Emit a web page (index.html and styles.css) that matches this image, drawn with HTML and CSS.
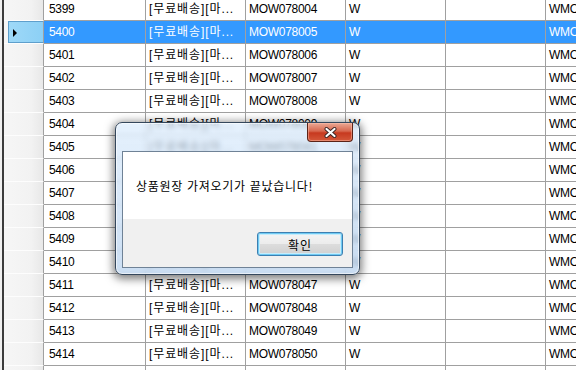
FILE: index.html
```html
<!DOCTYPE html>
<html lang="ko">
<head>
	<meta charset="UTF-8">
	<title>상품원장</title>
	<link rel="stylesheet" href="styles.css">
</head>
<body>
<div class="screen">
	<div class="grid">
		<div class="row"><div class="hd"></div><div class="c c1">5399</div><div class="c k">[무료배송][마...</div><div class="c">MOW078004</div><div class="c">W</div><div class="c"></div><div class="c">WMOW078004</div></div>
		<div class="row sel"><div class="hd"><span class="tri"></span></div><div class="c c1">5400</div><div class="c k">[무료배송][마...</div><div class="c">MOW078005</div><div class="c">W</div><div class="c"></div><div class="c">WMOW078005</div></div>
		<div class="row"><div class="hd"></div><div class="c c1">5401</div><div class="c k">[무료배송][마...</div><div class="c">MOW078006</div><div class="c">W</div><div class="c"></div><div class="c">WMOW078006</div></div>
		<div class="row"><div class="hd"></div><div class="c c1">5402</div><div class="c k">[무료배송][마...</div><div class="c">MOW078007</div><div class="c">W</div><div class="c"></div><div class="c">WMOW078007</div></div>
		<div class="row"><div class="hd"></div><div class="c c1">5403</div><div class="c k">[무료배송][마...</div><div class="c">MOW078008</div><div class="c">W</div><div class="c"></div><div class="c">WMOW078008</div></div>
		<div class="row"><div class="hd"></div><div class="c c1">5404</div><div class="c k">[무료배송][마...</div><div class="c">MOW078009</div><div class="c">W</div><div class="c"></div><div class="c">WMOW078009</div></div>
		<div class="row"><div class="hd"></div><div class="c c1">5405</div><div class="c k">[무료배송][마...</div><div class="c">MOW078041</div><div class="c">W</div><div class="c"></div><div class="c">WMOW078041</div></div>
		<div class="row"><div class="hd"></div><div class="c c1">5406</div><div class="c k">[무료배송][마...</div><div class="c">MOW078042</div><div class="c">W</div><div class="c"></div><div class="c">WMOW078042</div></div>
		<div class="row"><div class="hd"></div><div class="c c1">5407</div><div class="c k">[무료배송][마...</div><div class="c">MOW078043</div><div class="c">W</div><div class="c"></div><div class="c">WMOW078043</div></div>
		<div class="row"><div class="hd"></div><div class="c c1">5408</div><div class="c k">[무료배송][마...</div><div class="c">MOW078044</div><div class="c">W</div><div class="c"></div><div class="c">WMOW078044</div></div>
		<div class="row"><div class="hd"></div><div class="c c1">5409</div><div class="c k">[무료배송][마...</div><div class="c">MOW078045</div><div class="c">W</div><div class="c"></div><div class="c">WMOW078045</div></div>
		<div class="row"><div class="hd"></div><div class="c c1">5410</div><div class="c k">[무료배송][마...</div><div class="c">MOW078046</div><div class="c">W</div><div class="c"></div><div class="c">WMOW078046</div></div>
		<div class="row"><div class="hd"></div><div class="c c1">5411</div><div class="c k">[무료배송][마...</div><div class="c">MOW078047</div><div class="c">W</div><div class="c"></div><div class="c">WMOW078047</div></div>
		<div class="row"><div class="hd"></div><div class="c c1">5412</div><div class="c k">[무료배송][마...</div><div class="c">MOW078048</div><div class="c">W</div><div class="c"></div><div class="c">WMOW078048</div></div>
		<div class="row"><div class="hd"></div><div class="c c1">5413</div><div class="c k">[무료배송][마...</div><div class="c">MOW078049</div><div class="c">W</div><div class="c"></div><div class="c">WMOW078049</div></div>
		<div class="row"><div class="hd"></div><div class="c c1">5414</div><div class="c k">[무료배송][마...</div><div class="c">MOW078050</div><div class="c">W</div><div class="c"></div><div class="c">WMOW078050</div></div>
		<div class="row"><div class="hd"></div><div class="c c1">5415</div><div class="c k">[무료배송][마...</div><div class="c">MOW078051</div><div class="c">W</div><div class="c"></div><div class="c">WMOW078051</div></div>
	</div>

	<!-- 메시지 박스 -->
	<div class="dlg">
		<a href="#" class="close"><svg width="15" height="11" viewBox="0 0 15 11"><path d="M3.5 2L11.5 9M11.5 2L3.5 9" stroke="#3a2424" stroke-width="4" stroke-linecap="round"/><path d="M3.5 2L11.5 9M11.5 2L3.5 9" stroke="#fff" stroke-width="2.2" stroke-linecap="round"/></svg></a>
		<div class="client">
			<div class="msg">상품원장 가져오기가 끝났습니다!</div>
			<div class="foot"><a href="#" class="btn">확인</a></div>
		</div>
	</div>
</div>
</body>
</html>
```

FILE: styles.css
```css
body{margin: 0;overflow: hidden;background: #f0f0f0;}
.screen{position: relative;width: 576px;height: 370px;overflow: hidden;font-family: "Liberation Sans", "Noto Sans CJK KR", sans-serif;font-size: 12px;}
.screen a{text-decoration: none;color: #000;}

/* 그리드 */
.grid{margin-left: 2px;margin-top: -2px;border-left: 2px solid #3c3c3c;background: #fff;}
.row{display: flex;height: 23px;}
.row .hd{flex: 0 0 40px;box-sizing: border-box;border-right: 1px solid #a0a0a0;border-bottom: 1px solid #fdfdfd;background: linear-gradient(to right, #f6f6f6, #f2f2f2 70%, #e8e8e8);position: relative;}
.row .c{flex: 0 0 100px;box-sizing: border-box;border-right: 1px solid #a0a0a0;border-bottom: 1px solid #a0a0a0;padding: 0 3px;line-height: 22px;white-space: nowrap;overflow: hidden;color: #000;letter-spacing: -0.3px;}
.row .c1{flex-basis: 102px;padding-left: 5px;}
.row .k{letter-spacing: 0.9px;}
.row.sel .c{background: #3399ff;color: #fff;}
.row.sel .hd{background: linear-gradient(to right, #f6f6f6 4px, #9fd9f8 4px, #8cd0f5);box-shadow: inset 4px 0 0 #f6f6f6, inset 5px 0 0 #5e9fcc, inset 0 1px 0 #5e9fcc, inset 0 -1px 0 #5e9fcc;}
.tri{position: absolute;left: 9px;top: 8px;width: 0;height: 0;border-left: 4px solid #000;border-top: 4px solid transparent;border-bottom: 4px solid transparent;}

/* 메시지 박스 */
.dlg{position: absolute;left: 115px;top: 122px;width: 245px;height: 153px;box-sizing: border-box;display: flex;padding: 28px 6px 6px 6px;border: 1px solid #34475c;border-radius: 7px;background: linear-gradient(rgba(218,235,252,.7), rgba(190,214,240,.8));backdrop-filter: blur(2.5px);box-shadow: 0 2px 9px 2px rgba(0,0,0,.5), inset 0 0 0 1px rgba(255,255,255,.6);}
.dlg .close{position: absolute;right: 6px;top: 0;width: 46px;height: 19px;box-sizing: border-box;display: flex;align-items: center;justify-content: center;border: 1px solid #5c2418;border-top: none;border-radius: 0 0 4px 4px;background: linear-gradient(#eba995, #d7684f 45%, #c7391f 55%, #d4583a);box-shadow: inset 0 0 0 1px rgba(255,200,180,.45);}
.client{flex: 1;display: flex;flex-direction: column;border: 1px solid #6f8296;font-family: "Noto Sans CJK KR", "Liberation Sans", sans-serif;}
.msg{flex: 0 0 67px;display: flex;align-items: center;padding-left: 13px;background: #fff;color: #000;letter-spacing: 0.7px;}
.foot{flex: 1;display: flex;justify-content: flex-end;align-items: flex-start;padding: 13px 9px 0 0;background: #f0f0f0;}
.btn{display: flex;align-items: center;justify-content: center;width: 86px;height: 24px;box-sizing: border-box;border: 1px solid #3c7fb1;border-radius: 3px;letter-spacing: 1px;background: linear-gradient(#f4f4f4, #ececec 48%, #dcdcdc 52%, #d0d0d0);box-shadow: inset 0 0 0 1px #6fcaf3, inset 0 0 0 2px #c6ecfb;}
```
